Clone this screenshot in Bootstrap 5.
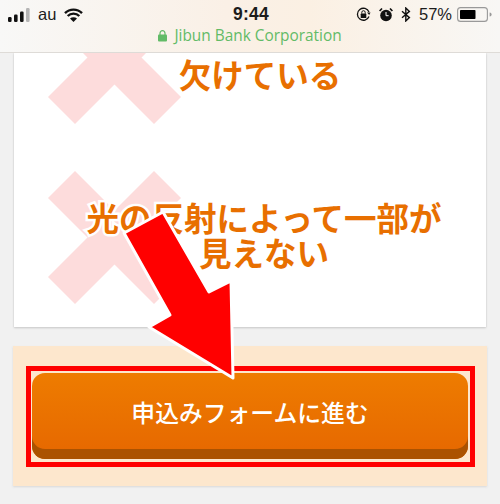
<!DOCTYPE html>
<html lang="ja">
<head>
<meta charset="utf-8">
<title>申込みフォーム</title>
<link rel="stylesheet" href="https://cdn.jsdelivr.net/npm/bootstrap@5.3.0/dist/css/bootstrap.min.css">
<style>
html,body{height:504px;overflow:hidden}
body{background:#f1f1f1;font-family:"Noto Sans","Noto Sans CJK JP",sans-serif}
.page-frame{width:500px;height:504px;overflow:hidden}
.status-area{height:53px;background:linear-gradient(90deg,#f8f8f7 0%,#faf0e6 45%,#fbf0e3 62%,#f8f7f5 100%);border-bottom:1px solid #dedbd7;z-index:3}
.status-row{height:29px;padding:0 8px;font-family:"Liberation Sans",sans-serif;font-size:16.5px;color:#1c1c1c}
.status-side{width:182px}
.clock{font-size:17.5px;font-weight:700;width:104px;text-align:center;letter-spacing:.2px;padding-left:2px}
.url-row{height:14px;font-family:"Open Sans","Liberation Sans",sans-serif;font-size:15.4px;color:#62bb67;line-height:14px;gap:7px}
.main-wrap{padding:0 14px}
.info-box{height:274px;background:#fff;box-shadow:0 1px 2px #c8c8c8,0 0 1px #d0d0d0;overflow:hidden}
.cross{left:34px;width:133px;height:133px}
.cross-a{top:-62px}
.cross-b{top:118px}
.ng-text{font-family:"Noto Sans CJK JP",sans-serif;font-weight:700;font-size:32.5px;line-height:35px;color:#e86f00;text-align:center;paint-order:stroke fill;-webkit-text-stroke:5px #fff;margin:0}
.ng-first{height:146px;padding:3px 0 0 20px}
.ng-second{padding-left:28px;white-space:nowrap}
.apply-panel{margin:19px -1px 0;height:140px;background:#fde7cd;box-shadow:0 1px 2px #d8d8d8;padding:20px 12px 0 13px}
.red-frame{height:101px;border:5px solid #f00;padding:2px 2px 0 1px}
.apply-btn{width:100%;height:86px;border:0;border-radius:13px;padding:2px 0 10px;background:linear-gradient(180deg,#ee7c00,#e66700);box-shadow:inset 0 -10px 0 #ab5200;color:#fff;font-family:"Noto Sans CJK JP",sans-serif;font-weight:500;font-size:23.8px}
.pointer{left:0;top:0;width:500px;height:504px;z-index:2;pointer-events:none}
.batt-gap{margin-left:-3px}
</style>
</head>
<body>
<div class="page-frame position-relative">
  <header class="status-area position-relative">
    <div class="status-row d-flex align-items-center justify-content-between">
      <div class="status-side d-flex align-items-center gap-2">
        <svg width="22" height="14" viewBox="0 0 22 14"><rect x="0" y="9" width="3.6" height="5" rx="1.2" fill="#111"/><rect x="6" y="6.500" width="3.6" height="7.500" rx="1.200" fill="#111"/><rect x="12" y="3.500" width="3.600" height="10.500" rx="1.200" fill="#111"/><rect x="18" y="0" width="3.600" height="14" rx="1.200" fill="#b5b5b5"/></svg>
        <span>au</span>
        <svg width="19" height="14" viewBox="0 0 19 14"><path d="M1 5.200a12 12 0 0 1 17 0M3.700 8a8.200 8.200 0 0 1 11.600 0" fill="none" stroke="#111" stroke-width="2.400"/><path d="M6 10.600a5 5 0 0 1 7 0L9.500 14z" fill="#111"/></svg>
      </div>
      <div class="clock">9:44</div>
      <div class="status-side d-flex align-items-center justify-content-end gap-2">
        <svg width="15" height="15" viewBox="0 0 15 15"><path d="M13 9.500A6 6 0 1 1 13 5" fill="none" stroke="#111" stroke-width="1.300"/><path d="M11 5.500h3.500L13.200 8z" fill="#111"/><rect x="4.700" y="6.600" width="5.600" height="4.400" rx=".6" fill="#111"/><path d="M5.800 6.600V5.400a1.700 1.700 0 0 1 3.400 0v1.200" fill="none" stroke="#111" stroke-width="1"/></svg>
        <svg width="14" height="15" viewBox="0 0 14 15"><circle cx="7" cy="8.500" r="5.800" fill="#111"/><path d="M7 5v3.700h2.600" fill="none" stroke="#fff" stroke-width="1"/><path d="M.6 4 3 1.500M13.400 4 11 1.500" stroke="#111" stroke-width="1.700"/></svg>
        <svg width="10" height="15" viewBox="0 0 10 15"><path d="M1 4.200 8.400 10.600 4.800 14V1l3.600 3.400L1 10.800" fill="none" stroke="#111" stroke-width="1.400"/></svg>
        <span>57%</span>
        <svg class="batt-gap" width="35" height="15" viewBox="0 0 35 15"><rect x=".6" y=".6" width="29.800" height="13.800" rx="3" fill="none" stroke="#999" stroke-width="1.100"/><rect x="3" y="3" width="15.500" height="9" rx=".8" fill="#000"/><path d="M32.600 5.500a2 2 0 0 1 0 4z" fill="#999"/></svg>
      </div>
    </div>
    <div class="url-row d-flex align-items-center justify-content-center">
      <svg width="9" height="12" viewBox="0 0 9 12"><rect x="0" y="4.600" width="9" height="7" rx="1" fill="#62bb67"/><path d="M2 5V3.200a2.500 2.500 0 0 1 5 0V5" fill="none" stroke="#62bb67" stroke-width="1.200"/></svg>
      <span>Jibun Bank Corporation</span>
    </div>
  </header>
  <main class="main-wrap">
    <div class="info-box position-relative">
      <svg class="cross cross-a position-absolute" viewBox="0 0 133 133"><path d="M27 0 66.500 39.500 106 0 133 27 93.500 66.500 133 106 106 133 66.500 93.500 27 133 0 106 39.500 66.500 0 27z" fill="#fddcdc"/></svg>
      <svg class="cross cross-b position-absolute" viewBox="0 0 133 133"><path d="M27 0 66.500 39.500 106 0 133 27 93.500 66.500 133 106 106 133 66.500 93.500 27 133 0 106 39.500 66.500 0 27z" fill="#fddcdc"/></svg>
      <div class="position-relative">
        <p class="ng-text ng-first">欠けている</p>
        <p class="ng-text ng-second">光の反射によって一部が<br>見えない</p>
      </div>
    </div>
    <section class="apply-panel">
      <div class="red-frame">
        <button type="button" class="apply-btn btn">申込みフォームに進む</button>
      </div>
    </section>
  </main>
  <svg class="pointer position-absolute" viewBox="0 0 500 504"><path d="M124 233 163 212 209 292 231 281 233 378 149 327 170 315z" fill="#f00" stroke="#fff" stroke-width="3" stroke-linejoin="round"/></svg>
</div>
<script src="https://cdn.jsdelivr.net/npm/bootstrap@5.3.0/dist/js/bootstrap.bundle.min.js"></script>
</body>
</html>
